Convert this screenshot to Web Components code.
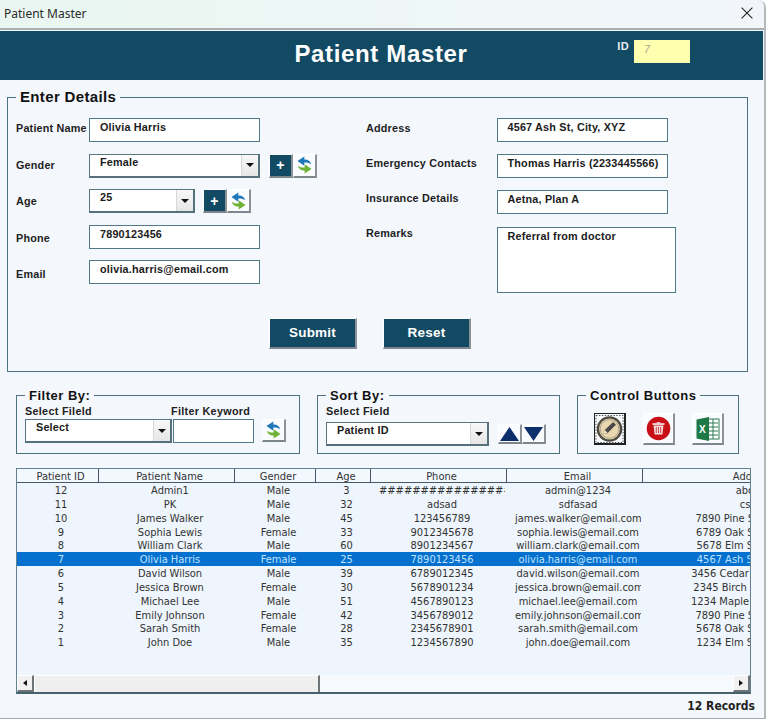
<!DOCTYPE html>
<html lang="en"><head><meta charset="utf-8"><title>Patient Master</title>
<style>
html,body{margin:0;background:#fff;}
body{width:768px;height:720px;overflow:hidden;font-family:"Liberation Sans",Arial,sans-serif;color:#1a1a1a;}
</style></head><body>
<template id="refresh-icon"><svg viewBox="0 0 20 20" width="19" height="20"><path d="M17 9.300C16.300 5.800 13 3.900 9.800 4.300V1L2.600 5.800l7.200 4.900V7.400c2.700-.3 5.100.4 7.200 1.900z" fill="#1f79b8"/><path d="M3 10.700c.7 3.500 4 5.400 7.200 5V19l7.200-4.800-7.200-4.900v3.300c-2.700.3-5.100-.4-7.200-1.900z" fill="#6fb233"/></svg></template>

<patient-window>
  <title-bar slot="title">Patient Master</title-bar>
  <app-banner id-value="7">Patient Master</app-banner>
  <main-area>
    <group-box legend="Enter Details" size="15" style="width:741px;--gb-pt:12px;--gb-pb:22px;--gb-pl:8px;--gb-pr:8px;--gb-ml:0">
      <detail-form></detail-form>
    </group-box>
    <tool-row></tool-row>
    <data-grid></data-grid>
    <record-count>12 Records</record-count>
  </main-area>
</patient-window>

<script>
const def=(name,css,html)=>{customElements.define(name,class extends HTMLElement{
  constructor(){super();const s=this.attachShadow({mode:'open'});s.innerHTML=`<style>${css}</style>`+(typeof html==='function'?html(this):html);}
});};
const refresh=()=>document.getElementById('refresh-icon').innerHTML;

def('patient-window',`:host{display:block;box-sizing:border-box;width:766px;height:719px;background:#f4f8fd;border-right:2px solid #b4b9bd;border-bottom:1px solid #a5aaae;border-top-right-radius:8px;overflow:hidden;display:flex;flex-direction:column}`,`<slot name="title"></slot><slot></slot>`);

def('title-bar',`:host{display:flex;align-items:center;justify-content:space-between;box-sizing:border-box;height:30px;padding:0 11px 2px 4px;background:linear-gradient(90deg,#e9f6f1,#eef7f6 50%,#f2f6fb);border-bottom:2px solid #a9aeb3;font:12px "Noto Sans",sans-serif;color:#2b2b2b}
svg{display:block}`,`<span><slot></slot></span><svg width="12" height="12" viewBox="0 0 12 12"><path d="M.6.6l10.8 10.8M11.4.6L.6 11.4" stroke="#222" stroke-width="1.1" fill="none"/></svg>`);

def('app-banner',`:host{display:grid;grid-template-columns:1fr auto 1fr;box-sizing:border-box;height:49px;width:763px;margin-top:1px;background:#134a63;color:#fff;flex:none}
h1{grid-column:2;margin:0 1px 0 0;padding-bottom:4px;align-self:center;font:bold 24px "Liberation Sans",sans-serif;letter-spacing:.65px}
.id{grid-column:3;display:flex;justify-self:end;align-items:flex-start;gap:5px;padding:9px 73px 0 0}
.lbl{font:bold 11px "Liberation Sans",sans-serif;letter-spacing:.4px;margin-top:0;color:#e7eef2}
.val{box-sizing:border-box;width:56px;height:23px;background:#ffffb0;color:#a9a98f;font:italic 11px "Liberation Sans",sans-serif;padding:3px 0 0 10px}`,
h=>`<h1><slot></slot></h1><div class="id"><span class="lbl">ID</span><span class="val">${h.getAttribute('id-value')}</span></div>`);

def('main-area',`:host{display:flex;flex-direction:column;padding:8px 0 0 7px;flex:1;min-height:0}`,`<slot></slot>`);

def('group-box',`:host{display:block;box-sizing:border-box}
fieldset{margin:0;border:1px solid #4d7383;box-sizing:border-box;height:100%;min-width:0;padding:var(--gb-pt,0) var(--gb-pr,0) var(--gb-pb,0) var(--gb-pl,0)}
legend{margin-left:var(--gb-ml,0);padding:0 4px;font-weight:bold;letter-spacing:var(--gb-ls,.35px);color:#111;line-height:1.2}`,
h=>`<fieldset><legend style="font-size:${h.getAttribute('size')||13}px">${h.getAttribute('legend')}</legend><slot></slot></fieldset>`);

def('text-box',`:host{display:block;box-sizing:border-box;width:var(--w,171px);height:var(--h,24px);background:#fff;border:1px solid #4f7888;border-bottom-width:1.5px;padding:1px 0 0 var(--tb-pl,10px);font:bold 10.8px/14px "Liberation Sans",sans-serif;letter-spacing:.2px;color:#1b1b1b;white-space:nowrap;overflow:hidden}`,`<slot></slot>`);

def('combo-box',`:host{display:flex;box-sizing:border-box;width:var(--w,171px);height:var(--h,24px);background:#fff;border:1px solid #5a7683;border-right:2px solid #56707c;border-bottom:2px solid #56707c;font:bold 10.8px/14px "Liberation Sans",sans-serif;letter-spacing:.2px;color:#1b1b1b}
.t{flex:1;padding:0 0 0 10px;white-space:nowrap;overflow:hidden}
.b{flex:none;width:16px;display:flex;align-items:center;justify-content:center;background:linear-gradient(#f8f8f8,#e6e6e6);border-left:1px solid #d5d8da}
i{display:block;width:0;height:0;border:4px solid transparent;border-top:4px solid #111;border-bottom:0}`,`<span class="t"><slot></slot></span><span class="b"><i></i></span>`);

def('raised-button',`:host{display:inline-flex;align-items:center;justify-content:center;box-sizing:border-box;flex:none;width:var(--w,24px);height:var(--h,24px);background:var(--bg,#f9fbfe);border-top:1px solid #fff;border-left:1px solid #fff;border-right:2px solid #8b9398;border-bottom:2px solid #7d868c;color:#fff;font:bold var(--fs,14px) "Liberation Sans",sans-serif;letter-spacing:.2px}`,`<slot></slot>`);

def('detail-form',`:host{display:block}
.cols{display:grid;grid-template-columns:73px 277px 131px 1fr;}
.stack{display:flex;flex-direction:column}
.lab{font:bold 10.8px/14px "Liberation Sans",sans-serif;letter-spacing:.2px;color:#1e1e1e;white-space:nowrap}
.l1{padding-top:3px;gap:22.5px}
.l2{padding-top:3px;gap:21px}
.in1{gap:11.5px}
.in2{gap:12.2px;--tb-pl:9.5px}
.row{display:flex;align-items:center}
.add{display:flex;margin-left:var(--ml,9px)}
.actions{display:flex;justify-content:flex-start;margin:25px 0 0 253px;gap:26px}
.plus{--w:24px;--h:24px;--bg:#134a63;--fs:14px}
.submit{--w:88px;--h:31px;--bg:#134a63;--fs:13.5px}
`,()=>`<div class="cols">
 <div class="stack l1"><span class="lab">Patient Name</span><span class="lab">Gender</span><span class="lab">Age</span><span class="lab">Phone</span><span class="lab">Email</span></div>
 <div class="stack in1">
  <text-box>Olivia Harris</text-box>
  <div class="row"><combo-box>Female</combo-box><div class="add"><raised-button class="plus">+</raised-button><raised-button>${refresh()}</raised-button></div></div>
  <div class="row"><combo-box style="--w:106px">25</combo-box><div class="add" style="--ml:8px"><raised-button class="plus">+</raised-button><raised-button>${refresh()}</raised-button></div></div>
  <text-box>7890123456</text-box>
  <text-box>olivia.harris@email.com</text-box>
 </div>
 <div class="stack l2"><span class="lab">Address</span><span class="lab">Emergency Contacts</span><span class="lab">Insurance Details</span><span class="lab">Remarks</span></div>
 <div class="stack in2">
  <text-box>4567 Ash St, City, XYZ</text-box>
  <text-box>Thomas Harris (2233445566)</text-box>
  <text-box>Aetna, Plan A</text-box>
  <text-box style="--w:179px;--h:66px">Referral from doctor</text-box>
 </div>
</div>
<div class="actions"><raised-button class="submit">Submit</raised-button><raised-button class="submit">Reset</raised-button></div>`);

const editIcon=`<svg width="30" height="30" viewBox="0 0 30 30"><rect x="1" y="1" width="28" height="28" fill="none" stroke="#444" stroke-width="1" stroke-dasharray="1.5 1.5"/><circle cx="15" cy="15" r="12" fill="#e9d7b0" stroke="#4d4a40" stroke-width="2.4"/><circle cx="15" cy="15" r="9.6" fill="none" stroke="#a9a48d" stroke-width="1"/><path d="M8.5 20.5l1.6-4.4 8.6-8.4 3 3-8.6 8.5z" fill="#4a4a48"/><path d="M8.5 20.5l1.6-4.4 2.8 2.9z" fill="#f6e6c4"/></svg>`;
const trashIcon=`<svg width="25" height="25" viewBox="0 0 25 25"><circle cx="12.5" cy="12.5" r="11.8" fill="#c80f16"/><path d="M6.5 7.3h12v1.5h-12z" fill="#fff"/><path d="M10 7.3c.3-1.5 4.700-1.500 5 0z" fill="#fff"/><path d="M7.600 9.400h9.800l-1 9.200h-7.800z" fill="#f5dede"/><path d="M10.300 11v6M12.500 11v6M14.700 11v6" stroke="#c9464a" stroke-width="1"/></svg>`;
const excelIcon=`<svg width="26" height="26" viewBox="0 0 26 26"><rect x="10" y="3" width="14" height="20" fill="#fff" stroke="#2c7a4e"/><path d="M14 7h9M14 11h9M14 15h9M14 19h9M18 3v20" stroke="#2c7a4e" stroke-width="1"/><path d="M1.500 3.500L14 1v24L1.500 22.500z" fill="#1d7a47"/><text x="7.500" y="17" font-family="Liberation Sans" font-size="10" font-weight="bold" fill="#fff" text-anchor="middle">X</text></svg>`;

def('tool-row',`:host{display:flex;margin:16px 0 0 9px;height:66px;align-items:stretch;flex:none}
group-box{--gb-ls:.5px}
.f{width:284px;--gb-pt:2px;--gb-pl:8px}
.s{width:243px;margin-left:17px;--gb-pt:2px;--gb-pl:8px}
.c{width:162px;margin-left:17px;--gb-pt:0;--gb-pl:16px;--gb-ml:-8px}
.cap{font:bold 10.8px/12px "Liberation Sans",sans-serif;letter-spacing:.3px;color:#222;display:block;white-space:nowrap}
.kw{margin-left:-2px}
.fgrid{display:grid;grid-template-columns:147px 81px auto;column-gap:1px;row-gap:2px}
.fgrid raised-button{margin-left:7px}
.sort{display:flex;align-items:center;margin-top:5px}
.arrows{display:flex;margin:0 0 0 9px}
.arrows raised-button{--w:24px;--h:20px}
.ctrl{display:flex;gap:17px;margin-top:10px}
.ctrl raised-button{--w:32px;--h:32px}
.ctrl .def{border:1px solid #222;border-right:2px solid #222;border-bottom:2px solid #222}
combo-box{--h:24px}
`,()=>`<group-box class="f" legend="Filter By:" size="13">
  <div class="fgrid"><span class="cap">Select Fileld</span><span class="cap kw" style="grid-column:2/4">Filter Keyword</span>
  <combo-box style="--w:147px">Select</combo-box><text-box style="--w:81px"></text-box><raised-button style="--h:23px">${refresh()}</raised-button></div>
</group-box>
<group-box class="s" legend="Sort By:" size="13">
  <span class="cap">Select Field</span>
  <div class="sort"><combo-box style="--w:163px">Patient ID</combo-box><div class="arrows">
   <raised-button><svg width="19" height="14" viewBox="0 0 19 14"><path d="M9.500 0L19 14H0z" fill="#0b2f6b"/></svg></raised-button>
   <raised-button><svg width="19" height="14" viewBox="0 0 19 14"><path d="M0 0h19L9.500 14z" fill="#0b2f6b"/></svg></raised-button></div></div>
</group-box>
<group-box class="c" legend="Control Buttons" size="13">
  <div class="ctrl"><raised-button class="def">${editIcon}</raised-button><raised-button>${trashIcon}</raised-button><raised-button>${excelIcon}</raised-button></div>
</group-box>`);

const heads=['Patient ID','Patient Name','Gender','Age','Phone','Email','Address'];
const data=[
[12,'Admin1','Male',3,'#########################','admin@1234','abcdef'],
[11,'PK','Male',32,'adsad','sdfasad','csdfs'],
[10,'James Walker','Male',45,'123456789','james.walker@email.com','7890 Pine St, City, XYZ'],
[9,'Sophia Lewis','Female',33,'9012345678','sophia.lewis@email.com','6789 Oak St, City, XYZ'],
[8,'William Clark','Male',60,'8901234567','william.clark@email.com','5678 Elm St, City, XYZ'],
[7,'Olivia Harris','Female',25,'7890123456','olivia.harris@email.com','4567 Ash St, City, XYZ'],
[6,'David Wilson','Male',39,'6789012345','david.wilson@email.com','3456 Cedar St, City, XYZ'],
[5,'Jessica Brown','Female',30,'5678901234','jessica.brown@email.com','2345 Birch St, City, XYZ'],
[4,'Michael Lee','Male',51,'4567890123','michael.lee@email.com','1234 Maple St, City, XYZ'],
[3,'Emily Johnson','Female',42,'3456789012','emily.johnson@email.com','7890 Pine St, City, XYZ'],
[2,'Sarah Smith','Female',28,'2345678901','sarah.smith@email.com','5678 Oak St, City, XYZ'],
[1,'John Doe','Male',35,'1234567890','john.doe@email.com','1234 Elm St, City, XYZ']];
def('data-grid',`:host{display:flex;flex-direction:column;box-sizing:border-box;width:735px;height:226px;margin:14px 0 0 9px;background:#eef5fc;border:1px solid #62808e;border-bottom:2px solid #46606c;overflow:hidden;flex:none;font:11px "DejaVu Sans",sans-serif;font-stretch:condensed;color:#333}
.view{flex:1;min-height:0;overflow:hidden}
.r{display:grid;grid-template-columns:82px 136px 81px 55px 136px 136px 213px;width:839px;height:13.83px;line-height:15.5px;text-align:center}
.r>span{display:block;margin:0 2px 0 8px;overflow-x:clip;white-space:nowrap}
.h{height:13.5px;background:#f2f8fe;border-bottom:1.5px solid #45596a;box-sizing:content-box}
.h>span{margin:0;padding:0 2px 0 8px;height:13.5px;border-right:1px solid #45596a}
.h>span:last-child{border-right:0}
.sel{background:#0670cf;color:#bfe4ff}
.sb{flex:none;display:flex;height:17px;background:#f6f9fd}
.btn{box-sizing:border-box;width:17px;background:#f1f1f1;border-top:1px solid #fff;border-left:1px solid #fff;border-right:2px solid #6d7478;border-bottom:2px solid #6d7478;display:flex;align-items:center;justify-content:center;flex:none}
.thumb{box-sizing:border-box;width:286px;background:#efefef;border-top:1px solid #fff;border-left:1px solid #fff;border-right:2px solid #6d7478;flex:none}
.track{flex:1}
i{display:block;width:0;height:0;border:3.5px solid transparent}
.l i{border-left:0;border-right:4px solid #111}.rr i{border-right:0;border-left:4px solid #111}
`,()=>`<div class="view"><div class="r h">${heads.map(t=>`<span>${t}</span>`).join('')}</div>${data.map(d=>`<div class="r${d[0]===7?' sel':''}">${d.map(c=>`<span>${c}</span>`).join('')}</div>`).join('')}</div>
<div class="sb"><span class="btn l"><i></i></span><span class="thumb"></span><span class="track"></span><span class="btn rr"><i></i></span></div>`);

def('record-count',`:host{display:block;width:748px;margin-top:5px;text-align:right;font:bold 12px/14px "DejaVu Sans",sans-serif;font-stretch:condensed;color:#222}`,`<slot></slot>`);
</script>
</body></html>
